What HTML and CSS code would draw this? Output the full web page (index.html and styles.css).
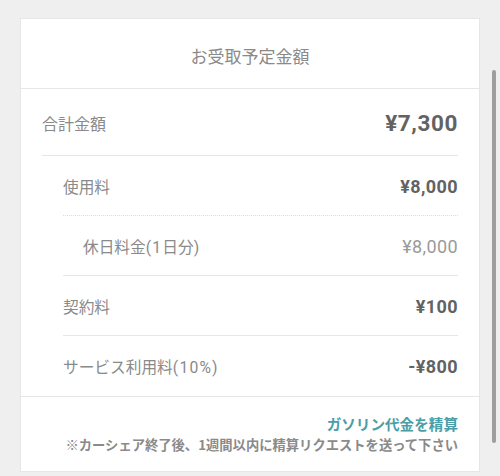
FILE: index.html
```html
<!DOCTYPE html>
<html lang="ja">
<head>
<meta charset="utf-8">
<link rel="stylesheet" href="styles.css">
</head>
<body>
<div class="card">
  <div class="card-header">お受取予定金額</div>
  <div class="card-body">
    <div class="row total">
      <span class="label">合計金額</span>
      <span class="value">¥7,300</span>
    </div>
    <div class="details">
      <div class="row item dotted">
        <span class="label">使用料</span>
        <span class="value">¥8,000</span>
      </div>
      <div class="row item sub">
        <span class="label">休日料金<span class="lat">(1</span>日分<span class="lat">)</span></span>
        <span class="value light">¥8,000</span>
      </div>
      <div class="row item">
        <span class="label">契約料</span>
        <span class="value">¥100</span>
      </div>
      <div class="row item last">
        <span class="label">サービス利用料<span class="lat">(10%)</span></span>
        <span class="value">-¥800</span>
      </div>
    </div>
  </div>
  <div class="card-footer">
    <a class="link">ガソリン代金を精算</a>
    <p class="note">※カーシェア終了後、1週間以内に精算リクエストを送って下さい</p>
  </div>
</div>
<div class="scrollbar"></div>
</body>
</html>
```
FILE: styles.css
```css
html, body {
  margin: 0;
  padding: 0;
  background: #efefef;
  height: 476px;
  overflow: hidden;
}
body {
  font-family: Roboto, "Noto Sans CJK JP", sans-serif;
  color: #8a8a8a;
  padding-top: 19px;
}
.card {
  margin: 0 21px;
  background: #fff;
  height: 452px;
  box-sizing: border-box;
  box-shadow: 0 0 0 1px #e6e6e6;
  display: flex;
  flex-direction: column;
}
.card-header {
  height: 70px;
  box-sizing: border-box;
  border-bottom: 1px solid #e6e6e6;
  display: flex;
  align-items: center;
  justify-content: center;
  font-family: "Noto Sans CJK JP", sans-serif;
  font-size: 17px;
  color: #8a8a8a;
  padding-top: 4px;
}
.card-body {
  padding: 0 21px;
  border-bottom: 1px solid #e6e6e6;
}
.row {
  display: flex;
  justify-content: space-between;
  align-items: center;
  box-sizing: border-box;
}
.row.total {
  height: 67px;
  border-bottom: 1px solid #e6e6e6;
  padding-top: 1px;
}
.row.total .label {
  font-size: 16px;
  color: #8a8a8a;
}
.row.total .value {
  font-size: 22.5px;
  font-weight: bold;
  color: #626262;
  letter-spacing: 0.6px;
}
.details {
  padding-left: 21px;
}
.row.item {
  height: 60px;
  border-bottom: 1px solid #e6e6e6;
  padding-top: 1px;
}
.row.item.dotted {
  border-bottom: 1px dotted #dcdcdc;
}
.row.item.last {
  border-bottom: none;
  height: 60px;
}
.row.item.sub .label {
  padding-left: 20px;
}
.row .label {
  font-family: "Noto Sans CJK JP", sans-serif;
  font-size: 15.7px;
  color: #8a8a8a;
}
.lat {
  font-family: Roboto, sans-serif;
  font-weight: 400;
  letter-spacing: 1.2px;
}
.row.item .value {
  font-size: 18px;
  font-weight: bold;
  color: #626262;
  letter-spacing: 0.4px;
}
.row.item .value.light {
  font-weight: normal;
  color: #9a9a9a;
}
.card-footer {
  flex: 1;
  padding: 17px 21px 0;
  display: flex;
  flex-direction: column;
  align-items: flex-end;
  font-family: "Noto Sans CJK JP", sans-serif;
}
.link {
  font-size: 14.6px;
  font-weight: bold;
  color: #4b9ea8;
  line-height: 20px;
}
.note {
  margin: 1px 0 0;
  font-size: 13.3px;
  font-weight: bold;
  color: #8a8a8a;
  line-height: 20px;
  white-space: nowrap;
}
.scrollbar {
  position: absolute;
  left: 492px;
  top: 70px;
  width: 4px;
  height: 373px;
  background: #9e9e9e;
  border-radius: 2px;
}
```
